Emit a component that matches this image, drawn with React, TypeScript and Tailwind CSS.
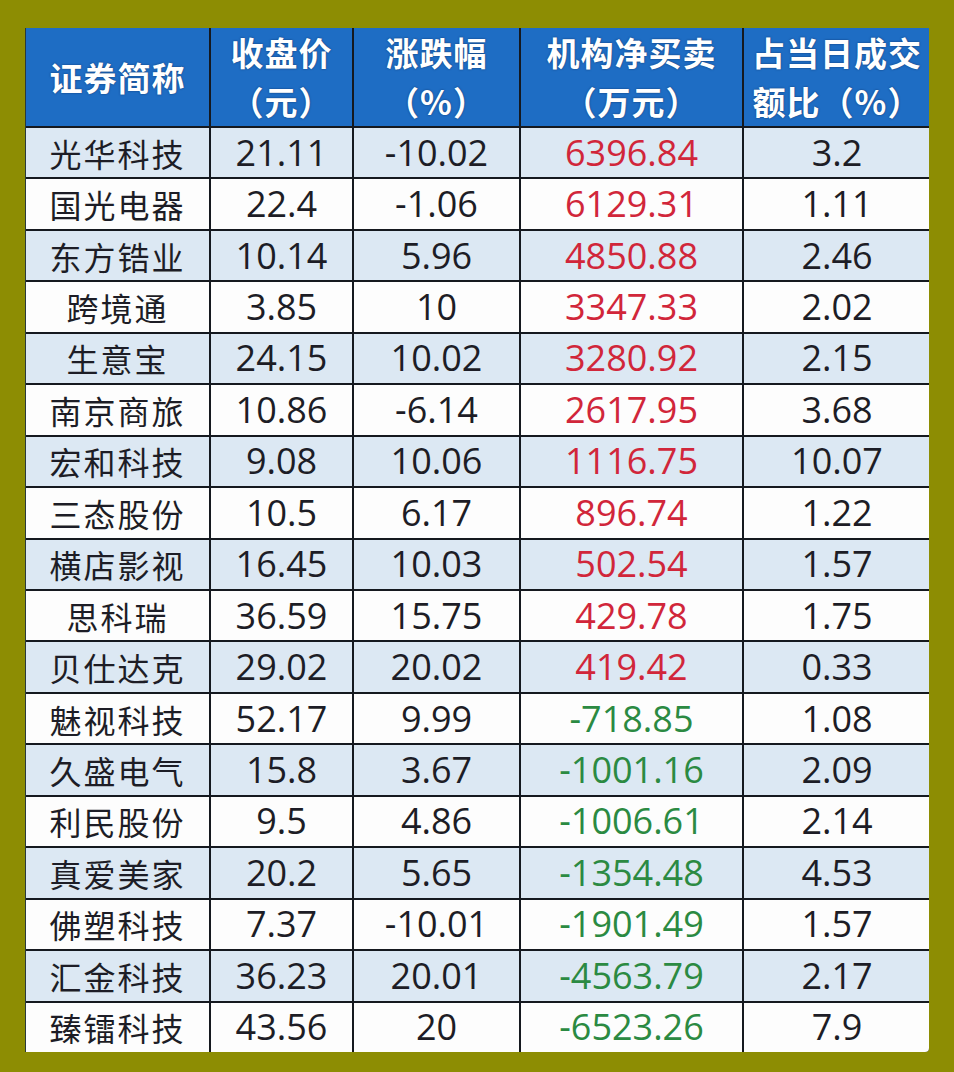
import React from 'react';

type Row = {
  name: string;
  close: string;
  change: string;
  net: string;
  ratio: string;
};

const rows: Row[] = [
  { name: '光华科技', close: '21.11', change: '-10.02', net: '6396.84', ratio: '3.2' },
  { name: '国光电器', close: '22.4', change: '-1.06', net: '6129.31', ratio: '1.11' },
  { name: '东方锆业', close: '10.14', change: '5.96', net: '4850.88', ratio: '2.46' },
  { name: '跨境通', close: '3.85', change: '10', net: '3347.33', ratio: '2.02' },
  { name: '生意宝', close: '24.15', change: '10.02', net: '3280.92', ratio: '2.15' },
  { name: '南京商旅', close: '10.86', change: '-6.14', net: '2617.95', ratio: '3.68' },
  { name: '宏和科技', close: '9.08', change: '10.06', net: '1116.75', ratio: '10.07' },
  { name: '三态股份', close: '10.5', change: '6.17', net: '896.74', ratio: '1.22' },
  { name: '横店影视', close: '16.45', change: '10.03', net: '502.54', ratio: '1.57' },
  { name: '思科瑞', close: '36.59', change: '15.75', net: '429.78', ratio: '1.75' },
  { name: '贝仕达克', close: '29.02', change: '20.02', net: '419.42', ratio: '0.33' },
  { name: '魅视科技', close: '52.17', change: '9.99', net: '-718.85', ratio: '1.08' },
  { name: '久盛电气', close: '15.8', change: '3.67', net: '-1001.16', ratio: '2.09' },
  { name: '利民股份', close: '9.5', change: '4.86', net: '-1006.61', ratio: '2.14' },
  { name: '真爱美家', close: '20.2', change: '5.65', net: '-1354.48', ratio: '4.53' },
  { name: '佛塑科技', close: '7.37', change: '-10.01', net: '-1901.49', ratio: '1.57' },
  { name: '汇金科技', close: '36.23', change: '20.01', net: '-4563.79', ratio: '2.17' },
  { name: '臻镭科技', close: '43.56', change: '20', net: '-6523.26', ratio: '7.9' },
];

const cjk = "font-['Noto_Sans_CJK_SC',sans-serif]";
const num = "font-['Open_Sans','Noto_Sans_CJK_SC',sans-serif]";

const HeaderCell: React.FC<{ lines: string[] }> = ({ lines }) => (
  <div
    className={`bg-[#1e6dc4] flex flex-col items-center justify-center text-white font-bold text-[33px] leading-[49px] tracking-[1px] whitespace-nowrap [text-shadow:0_0_2px_rgba(10,30,70,0.7)] ${cjk}`}
  >
    {lines.map((l, i) => (
      <span key={i}>{l}</span>
    ))}
  </div>
);

export default function App() {
  return (
    <div className="w-[954px] h-[1072px] bg-[#8d8d03] pt-[28px] pl-[25px]">
      <div className="w-[904px] h-[1024px] bg-[#15191f] grid grid-cols-[183px_141px_165px_221px_186px] grid-rows-[98px_repeat(18,minmax(0,1fr))] gap-[2px] border-l border-[#2a3a3a] rounded-br-sm overflow-hidden">
        <HeaderCell lines={['证券简称']} />
        <HeaderCell lines={['收盘价', '（元）']} />
        <HeaderCell lines={['涨跌幅', '（%）']} />
        <HeaderCell lines={['机构净买卖', '（万元）']} />
        <HeaderCell lines={['占当日成交', '额比（%）']} />

        {rows.map((row, index) => {
          const bg = index % 2 === 0 ? 'bg-[#dce8f3]' : 'bg-[#fdfdfd]';
          const netColor = row.net.startsWith('-') ? 'text-[#2b8a42]' : 'text-[#d1263a]';
          return (
            <React.Fragment key={row.name}>
              <div className={`${bg} min-h-0 flex items-center justify-center leading-none text-[32px] tracking-[2px] text-[#1d1d26] ${cjk}`}>
                {row.name}
              </div>
              <div className={`${bg} min-h-0 flex items-center justify-center leading-none text-[36px] text-[#1d1d26] ${num}`}>
                {row.close}
              </div>
              <div className={`${bg} min-h-0 flex items-center justify-center leading-none text-[36px] text-[#1d1d26] ${num}`}>
                {row.change}
              </div>
              <div className={`${bg} min-h-0 flex items-center justify-center leading-none text-[36px] ${netColor} ${num}`}>
                {row.net}
              </div>
              <div className={`${bg} min-h-0 flex items-center justify-center leading-none text-[36px] text-[#1d1d26] ${num}`}>
                {row.ratio}
              </div>
            </React.Fragment>
          );
        })}
      </div>
    </div>
  );
}
